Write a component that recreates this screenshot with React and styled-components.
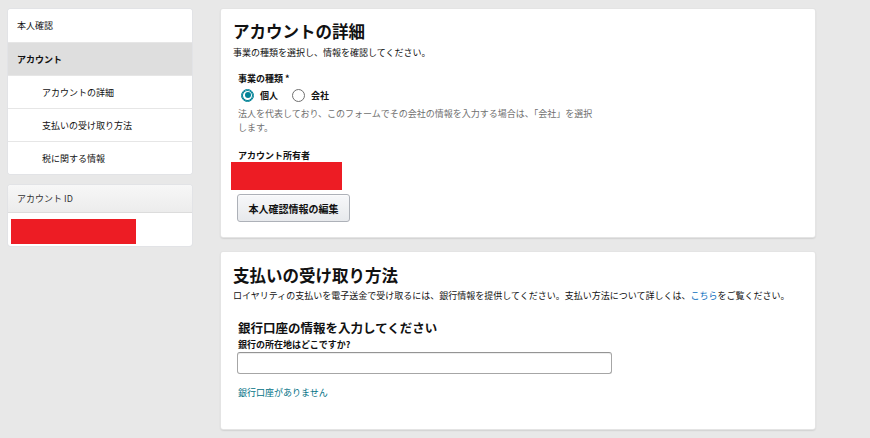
import React from "react";
import styled, { createGlobalStyle } from "styled-components";

const Global = createGlobalStyle`
  html, body { margin: 0; padding: 0; background: #e8e8e8; }
  body { font-family: "Noto Sans CJK JP", "Noto Sans", sans-serif; color: #111; }
  * { box-sizing: border-box; }
`;

const Page = styled.div`
  display: flex;
  align-items: flex-start;
  gap: 29px;
  padding: 9px 0 0 8px;
  width: 870px;
  height: 438px;
  overflow: hidden;
`;

const Sidebar = styled.aside`
  width: 184px;
  display: flex;
  flex-direction: column;
  gap: 11px;
`;

const SideCard = styled.div`
  background: #fff;
  border-radius: 3px;
  box-shadow: 0 0 0 1px #e2e3e6;
  overflow: hidden;
`;

const NavItem = styled.div`
  height: 33px;
  display: flex;
  align-items: center;
  padding-left: ${(p) => (p.$sub ? 34 : 9)}px;
  font-size: 9px;
  font-weight: ${(p) => (p.$active ? 700 : 400)};
  background: ${(p) => (p.$active ? "#dedede" : "#fff")};
  color: #111;
  & + & { border-top: 1px solid #e6e6e6; }
`;

const SideHeader = styled.div`
  height: 28px;
  display: flex;
  align-items: center;
  padding-left: 9px;
  font-size: 9px;
  color: #333;
  background: linear-gradient(#f7f7f7, #ececec);
  border-bottom: 1px solid #dcdcdc;
`;

const SideBody = styled.div`
  padding: 6px 0 2px 3px;
`;

const Redact = styled.div`
  background: #ed1c24;
  width: ${(p) => p.$w}px;
  height: ${(p) => p.$h}px;
  margin-left: ${(p) => p.$ml || 0}px;
`;

const Main = styled.main`
  width: 594px;
  display: flex;
  flex-direction: column;
  gap: 15px;
`;

const Card = styled.section`
  background: #fff;
  border-radius: 2px;
  box-shadow: 0 0 0 1px #e4e4e4, 0 1px 2px rgba(0, 0, 0, 0.3);
  padding: ${(p) => p.$pad};
`;

const Title = styled.h1`
  margin: 0;
  font-size: 16.5px;
  line-height: 20px;
  font-weight: 700;
  color: #111;
`;

const Desc = styled.p`
  margin: ${(p) => p.$mt || 5}px 0 0;
  font-size: 9px;
  line-height: 13px;
  color: #111;
`;

const Link = styled.a`
  color: ${(p) => p.$color || "#0a6ebd"};
  text-decoration: none;
`;

const Section = styled.div`
  padding-left: 5px;
`;

const Label = styled.div`
  margin-top: ${(p) => p.$mt}px;
  font-size: 9px;
  line-height: 12px;
  font-weight: 700;
  color: #111;
`;

const RadioRow = styled.div`
  margin-top: 2px;
  height: 16px;
  display: flex;
  align-items: center;
  padding-left: 3px;
`;

const RadioOption = styled.label`
  display: flex;
  align-items: center;
  gap: 6px;
  font-size: 9px;
  font-weight: 700;
  margin-right: 14px;
`;

const RadioCircle = styled.span`
  width: 13px;
  height: 13px;
  border-radius: 50%;
  border: 1px solid ${(p) => (p.$checked ? "#008296" : "#6f6f6f")};
  box-shadow: ${(p) => (p.$checked ? "0 0 0 1px #008296 inset" : "none")};
  display: flex;
  align-items: center;
  justify-content: center;
  &::after {
    content: "";
    display: ${(p) => (p.$checked ? "block" : "none")};
    width: 6px;
    height: 6px;
    border-radius: 50%;
    background: #008296;
  }
`;

const Help = styled.p`
  margin: 4px 0 0;
  max-width: 361px;
  font-size: 9px;
  line-height: 13.5px;
  color: #6f6f6f;
`;

const Button = styled.button`
  margin: 4px 0 0 4px;
  width: 113px;
  height: 28px;
  font-family: inherit;
  font-size: 10px;
  font-weight: 700;
  color: #111;
  background: linear-gradient(#f7f8fa, #e7e9ec);
  border: 1px solid #adb1b8;
  border-radius: 3px;
  box-shadow: 0 1px 0 rgba(255, 255, 255, 0.6) inset;
  padding: 0;
`;

const SubHeading = styled.h2`
  margin: 18px 0 0;
  font-size: 12.5px;
  line-height: 16px;
  font-weight: 700;
  color: #111;
`;

const Input = styled.input`
  display: block;
  margin: 1px 0 0 -1px;
  width: 375px;
  height: 22px;
  border: 1px solid #a6a6a6;
  border-top-color: #949494;
  border-radius: 3px;
  box-shadow: 0 1px 0 rgba(0, 0, 0, 0.07) inset;
  background: #fff;
`;

const TextLink = styled.div`
  margin-top: 13px;
  font-size: 9px;
  line-height: 12px;
`;

export default function App() {
  return (
    <>
      <Global />
      <Page>
        <Sidebar>
          <SideCard>
            <NavItem>本人確認</NavItem>
            <NavItem $active>アカウント</NavItem>
            <NavItem $sub>アカウントの詳細</NavItem>
            <NavItem $sub>支払いの受け取り方法</NavItem>
            <NavItem $sub>税に関する情報</NavItem>
          </SideCard>
          <SideCard>
            <SideHeader>アカウント ID</SideHeader>
            <SideBody>
              <Redact $w={125} $h={25} />
            </SideBody>
          </SideCard>
        </Sidebar>
        <Main>
          <Card $pad="12px 12px 15px 12px">
            <Title>アカウントの詳細</Title>
            <Desc>事業の種類を選択し、情報を確認してください。</Desc>
            <Section>
              <Label $mt={14}>事業の種類 *</Label>
              <RadioRow>
                <RadioOption>
                  <RadioCircle $checked />
                  個人
                </RadioOption>
                <RadioOption>
                  <RadioCircle />
                  会社
                </RadioOption>
              </RadioRow>
              <Help>
                法人を代表しており、このフォームでその会社の情報を入力する場合は、「会社」を選択します。
              </Help>
              <Label $mt={16}>アカウント所有者</Label>
            </Section>
            <Redact $w={111} $h={28} $ml={-2} />
            <Button>本人確認情報の編集</Button>
          </Card>
          <Card $pad="13px 12px 30px 12px">
            <Title>支払いの受け取り方法</Title>
            <Desc $mt={4}>
              ロイヤリティの支払いを電子送金で受け取るには、銀行情報を提供してください。支払い方法について詳しくは、
              <Link>こちら</Link>をご覧ください。
            </Desc>
            <Section>
              <SubHeading>銀行口座の情報を入力してください</SubHeading>
              <Label $mt={3}>銀行の所在地はどこですか?</Label>
              <Input />
              <TextLink>
                <Link $color="#007185">銀行口座がありません</Link>
              </TextLink>
            </Section>
          </Card>
        </Main>
      </Page>
    </>
  );
}
